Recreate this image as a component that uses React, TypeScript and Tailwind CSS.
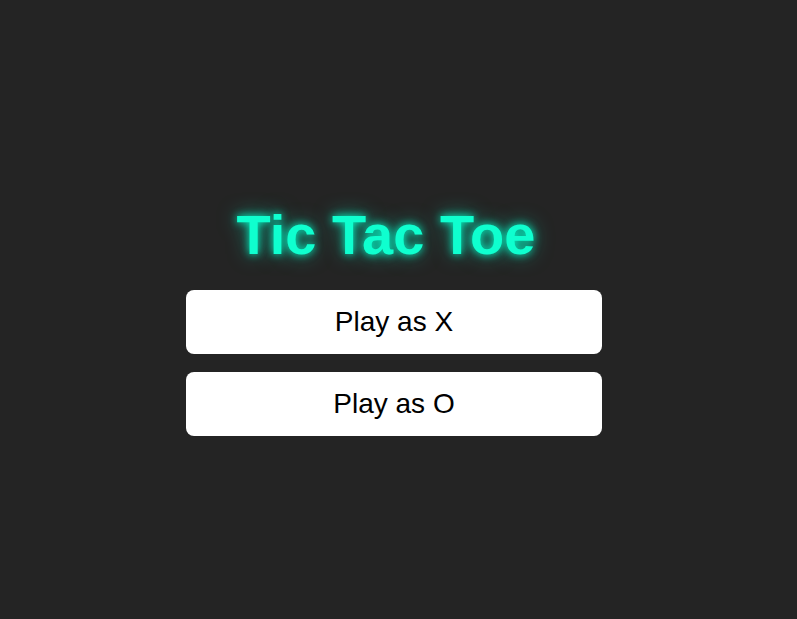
export default function App() {
    return (
        <div className="min-h-screen bg-[#242424] flex flex-col items-center pt-[203px] pr-[9px] font-['Liberation_Sans',Arial,sans-serif]">
            {/* TITLE */}
            <h1 className="text-[56px] leading-[64px] font-bold text-[#0fffcf] mb-[23px] mr-[16px] [text-shadow:0_0_8px_#00ffcc,0_0_20px_rgba(0,255,204,0.55)]">
                Tic Tac Toe
            </h1>

            {/* BUTTONS */}
            <div className="flex flex-col gap-[18px]">
                {["X", "O"].map((p) => (
                    <button
                        key={p}
                        className="w-[416px] h-[64px] bg-white rounded-lg text-[28px] text-black"
                    >
                        Play as {p}
                    </button>
                ))}
            </div>
        </div>
    );
}
